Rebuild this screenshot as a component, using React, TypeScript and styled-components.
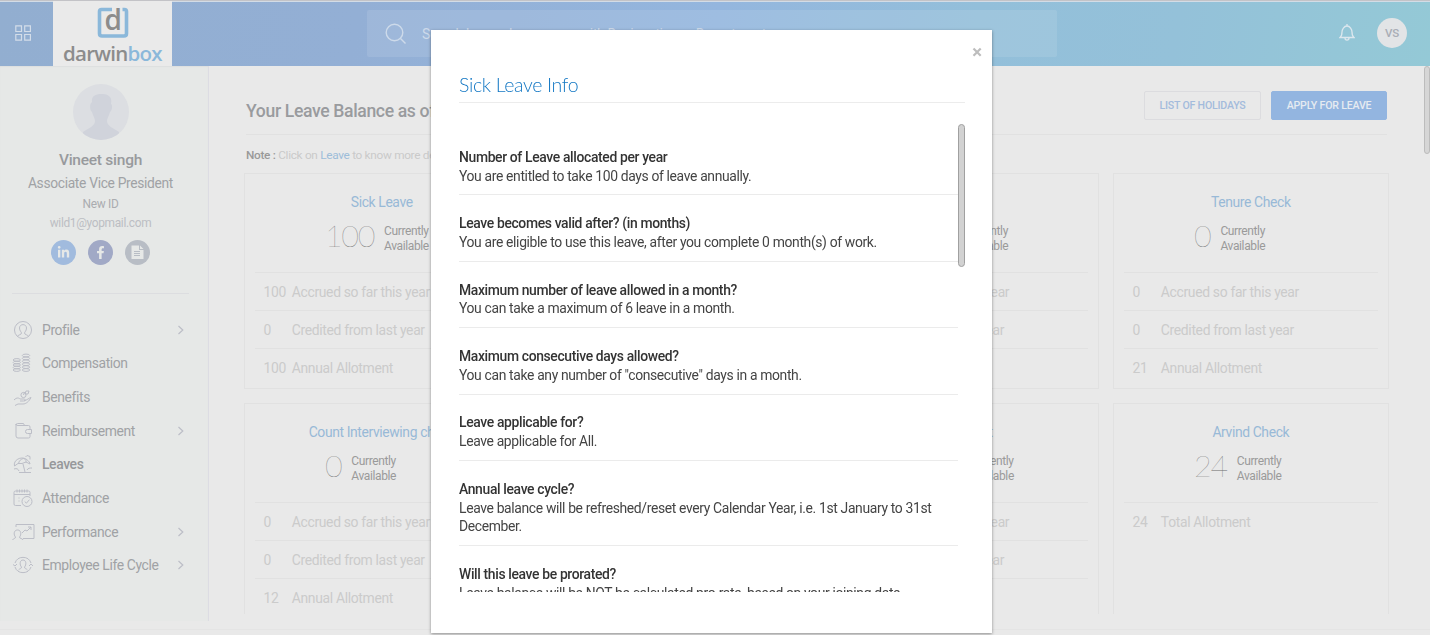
import React from 'react'
import styled, { createGlobalStyle } from 'styled-components'
import { FaLinkedinIn, FaFacebookF } from 'react-icons/fa'

const GlobalStyle = createGlobalStyle`
    * {
        box-sizing: border-box;
    }

    body {
        margin: 0;
        background: #e9e9e9;
        font-family: Roboto, sans-serif;
        overflow: hidden;
    }
`

const Page = styled.div`
    display: flex;
    flex-direction: column;
    height: 635px;
    overflow: hidden;
`

const Header = styled.header`
    flex: none;
    display: flex;
    height: 66px;
    border-top: 1px solid #c3c3c7;
    background: linear-gradient(100deg, #92aed0 0%, #93afd5 25%, #94b6de 50%, #93bfda 68%, #94c1d9 82%, #94c9d6 100%);
    box-shadow: inset 0 1px 0 #d3dce6;
`

const AppsButton = styled.div`
    display: flex;
    width: 53px;
    padding: 24px 0 0 15px;
`

const Logo = styled.div`
    display: flex;
    flex-direction: column;
    align-items: center;
    width: 119px;
    padding-top: 5px;
    background: #eaeaea;
`

const LogoText = styled.div`
    margin-top: 1px;
    font: 600 20.5px/26px 'Open Sans', sans-serif;
    letter-spacing: -0.75px;
    color: #8c8c8c;

    span {
        color: #8bb8da;
    }
`

const Search = styled.div`
    display: flex;
    align-items: center;
    width: 690px;
    height: 47px;
    margin: 9px 0 0 195px;
    padding-left: 18px;
    border-radius: 2px;
    background: rgba(255, 255, 255, 0.1);
    color: #cddaea;
    font-size: 14px;
    letter-spacing: -0.37px;

    svg {
        margin-right: 15px;
    }
`

const HeaderActions = styled.div`
    display: flex;
    align-items: center;
    margin: 0 23px 2px auto;
`

const Initials = styled.div`
    width: 30px;
    margin-left: 22px;
    border-radius: 50%;
    background: #e2e4e6;
    color: #a9adb5;
    font: 500 11.5px/30px Roboto, sans-serif;
    letter-spacing: -0.3px;
    text-align: center;
`

const Body = styled.div`
    display: flex;
    flex: none;
    height: 564px;
    border-bottom: 1px solid #e4e4e4;
`

const Sidebar = styled.aside`
    flex: none;
    width: 209px;
    height: 555px;
    border-right: 1px solid #dcdce3;
    background: #e6e8e7;
    box-shadow: inset 0 1px 1px #dddfdf;
`

const ProfileBox = styled.div`
    display: flex;
    flex-direction: column;
    align-items: center;
    width: 177px;
    height: 228px;
    margin: 0 0 18.8px 12px;
    padding-top: 18px;
    border-bottom: 1px solid #dcdde0;
`

const ProfileName = styled.div`
    margin-top: 10px;
    color: #989a9d;
    font: 500 15.5px/20px Roboto, sans-serif;
    letter-spacing: -0.25px;
`

const ProfileLine = styled.div<{ $size: number; $height: number; $color: string }>`
    color: ${p => p.$color};
    font-size: ${p => p.$size}px;
    line-height: ${p => p.$height}px;
    letter-spacing: -0.32px;
    white-space: nowrap;
`

const Socials = styled.div`
    display: flex;
    gap: 12px;
    margin-top: 6px;
`

const Social = styled.div<{ $color: string }>`
    display: flex;
    align-items: center;
    justify-content: center;
    width: 25px;
    height: 25px;
    border-radius: 50%;
    background: ${p => p.$color};
    color: #e6e8e7;
`

const NavItem = styled.div<{ $active?: boolean }>`
    display: flex;
    align-items: center;
    height: 33.7px;
    padding: 0 23px 0 12px;
    color: ${p => (p.$active ? '#96989b' : '#a0a2a5')};
    font-size: 13.9px;
    font-weight: ${p => (p.$active ? 500 : 400)};
    letter-spacing: -0.38px;

    svg {
        flex: none;
        color: #bcbec7;
    }
`

const NavLabel = styled.span`
    flex: 1;
    margin-left: 6px;
`

const Main = styled.main`
    flex: 1;
    height: 548px;
    padding: 0 0 0 35px;
    overflow: hidden;
`

const TitleBar = styled.div`
    display: flex;
    justify-content: space-between;
    width: 1141px;
    height: 69px;
    margin-left: 2px;
    padding-top: 25px;
    border-bottom: 1px solid #e1e1e1;
`

const Heading = styled.div`
    color: #999b9e;
    font: 500 17.6px/40px Roboto, sans-serif;
    letter-spacing: -0.36px;
`

const Buttons = styled.div`
    display: flex;
    gap: 10px;
`

const Button = styled.div<{ $primary?: boolean }>`
    width: ${p => (p.$primary ? 116 : 117)}px;
    height: 29px;
    border: 1px solid ${p => (p.$primary ? '#93b5e0' : '#dcdcdf')};
    border-radius: 2px;
    background: ${p => (p.$primary ? '#93b5e0' : 'transparent')};
    color: ${p => (p.$primary ? '#e6ebf1' : '#a3bbdc')};
    font: 500 10.6px/27px Roboto, sans-serif;
    letter-spacing: -0.2px;
    text-align: center;
`

const Note = styled.div`
    height: 38px;
    margin-left: 2px;
    color: #cacaca;
    font-size: 11.8px;
    line-height: 41px;
    letter-spacing: -0.3px;

    b {
        color: #999;
        font-weight: 500;
    }

    span {
        color: #9dbdd9;
    }
`

const Cards = styled.div`
    display: grid;
    grid-template-columns: repeat(4, 275.5px);
    grid-auto-rows: 215.5px;
    gap: 14.5px 14.2px;
`

const Card = styled.div`
    padding: 18px 10px 0;
    border: 1px solid #e1e1e1;
`

const CardTitle = styled.div`
    color: #98b9d7;
    font-size: 13.9px;
    line-height: 20px;
    letter-spacing: -0.38px;
    text-align: center;
    white-space: nowrap;
`

const Balance = styled.div`
    display: flex;
    align-items: center;
    height: 60.5px;
    padding: 0 0 7px 70px;
    border-bottom: 1px solid #e1e1e1;
`

const Count = styled.div`
    margin: -6px 10px 0 0;
    color: #6c6c6c;
    font: 100 30.5px/40px Lato, sans-serif;
    letter-spacing: -1.35px;
`

const Available = styled.div`
    margin-top: 1px;
    color: #9a9a9a;
    font-size: 12px;
    line-height: 15px;
    letter-spacing: -0.38px;
`

const CardRow = styled.div`
    display: flex;
    height: 38.3px;
    padding-left: 8.5px;
    border-bottom: 1px solid #e1e1e1;
    color: #cbcbcb;
    font-size: 13.9px;
    line-height: 38px;
    letter-spacing: -0.33px;
    white-space: nowrap;

    &:last-child {
        border-bottom: 0;
    }

    span {
        width: 28.3px;
    }
`

const PageScroll = styled.div`
    width: 6px;
    height: 88px;
    border: 1px solid #bcbcbc;
    border-radius: 3px;
    background: #d6d6d6;
`

const Modal = styled.div`
    position: fixed;
    top: 30px;
    left: 431px;
    width: 561px;
    height: 603px;
    padding: 15px 27px 0 28px;
    background: #fff;
    box-shadow: 0 1px 3px rgba(0, 0, 0, 0.4);
`

const Close = styled.div`
    display: flex;
    justify-content: flex-end;
    height: 26px;
    margin-right: -17.5px;
    padding-top: 0.5px;
`

const ModalTitle = styled.div`
    height: 32px;
    border-bottom: 1px solid #ececec;
    color: #1478c4;
    font: 300 19.5px/27px Lato, sans-serif;
    letter-spacing: -0.34px;
`

const ModalBody = styled.div`
    display: flex;
    justify-content: space-between;
    height: 468px;
    margin-top: 21px;
    overflow: hidden;
`

const InfoList = styled.div`
    width: 500px;
    padding-top: 5px;
`

const Info = styled.div`
    padding: 18.9px 0 9px;
    border-bottom: 1px solid #ebebeb;
    color: #444;
    font-size: 13.9px;
    line-height: 18.75px;
    letter-spacing: -0.35px;

    b {
        display: block;
        color: #333;
        font-weight: 500;
    }
`

const ModalScroll = styled.div`
    width: 7px;
    height: 143px;
    border: 1px solid #a0a0a0;
    border-radius: 3.5px;
    background: #d2d2d2;
`

const iconPaths: Record<string, React.ReactNode> = {
    profile: <><circle cx="11" cy="10" r="8.5" /><path d="M5.500 16.500c.500-2 4-1.500 4-3.500 0-1-2-2-2-5 0-4.500 7-4.500 7 0 0 3-2 4-2 5 0 2 3.500 1.500 4 3.500" /></>,
    compensation: <>
        {[7, 9.5, 12, 14.5, 17].map(y => <ellipse key={y} cx="4.8" cy={y} rx="3.6" ry="1.4" />)}
        {[2.5, 5.4, 8.3, 11.2, 14.1, 17].map(y => <ellipse key={y} cx="14" cy={y} rx="3.7" ry="1.4" />)}
    </>,
    benefits: <><path d="M2 13c3-3 5-2 6-1h4c2 0 1 2-.500 2H8m4 0c3-1 5-3 7-3.500-2 4-5 6.500-8 6.500H6l-3 1.500" /><circle cx="11.500" cy="8" r="2.600" /><path d="M11.500 8l1-3M14 4h3l-1 3h-3z" /></>,
    reimbursement: <><path d="M18 8V6Q18 4.500 16.500 4.500H6Q4 4.500 4 3V15q0 2 2 2h10.500Q18 17 18 15.500V13M4 4Q4 2.500 5.500 2.500H11.500l1 2" /><path d="M19.500 8.500h-4a2 2 0 000 4h4z" /></>,
    leaves: <><path d="M2.500 12C1 6 9 2 14 5c3 2 4 4 4 5l-4-2-4 1.500-4 0zM6.500 10c0-3 3-5.500 5-5.500 3 1 2.500 2.500 2.500 4M11 10l2 8M2 15c3-1 4 0 5 2M15 16c1-2 3-2 5-2M7 18.500h12M13.500 3l1.500-1.500 3 1v3" /></>,
    attendance: <><path d="M9 17.500H3.500Q2 17.500 2 16V4.500Q2 3 3.500 3h13q1.500 0 1.500 1.500V8M2 6.500h16M5 1.500v3m2.500-3v3M10 1.500v3m2.500-3v3M15 1.500v3M6.500 10h1m-1 3h1" /><circle cx="15" cy="13.500" r="5" /><path d="M12.700 13.500l1.700 1.700 3-3.500" /></>,
    performance: <><path d="M4 5V2.500h18v14H11M.500 18c1-2 3-1 3-3-2-2-2-7 2-7s4 5 2 7c0 2 3 1 3.500 3M10 11l3-3 2 1 4-4m-3 0h3v3" /></>,
    cycle: <><path d="M3 8a8.500 8.500 0 0116 0M3 12a8.500 8.500 0 0016 0M1 9.500l2 1.500 2-2m16 2l-2-2-2 2M6.500 15c1-1.500 3-1 3-3-2-2-2-7 1.500-7s3.500 5 1.500 7c0 2 2 1.500 3 3" /></>,
}

const NavIcon = ({ name }: { name: string }) => (
    <svg width="24" height="20" viewBox="0 0 24 20" fill="none" stroke="currentColor" strokeWidth="1">
        {iconPaths[name]}
    </svg>
)

const Chevron = () => (
    <svg width="8" height="10" viewBox="0 0 8 10" fill="none" stroke="currentColor" strokeWidth="1.2">
        <path d="M1.500 1l4.300 4-4.300 4" />
    </svg>
)

const navItems = [
    { icon: 'profile', label: 'Profile', more: true },
    { icon: 'compensation', label: 'Compensation' },
    { icon: 'benefits', label: 'Benefits' },
    { icon: 'reimbursement', label: 'Reimbursement', more: true },
    { icon: 'leaves', label: 'Leaves', active: true },
    { icon: 'attendance', label: 'Attendance' },
    { icon: 'performance', label: 'Performance', more: true },
    { icon: 'cycle', label: 'Employee Life Cycle', more: true },
]

const yearRows = (accrued: string, credited: string, annual: string) => [
    [accrued, 'Accrued so far this year'],
    [credited, 'Credited from last year'],
    [annual, 'Annual Allotment'],
]

const cards = [
    { title: 'Sick Leave', count: '100', rows: yearRows('100', '0', '100') },
    { title: 'Casual Leave', count: '12', rows: yearRows('12', '0', '12') },
    { title: 'Paid', count: '100', rows: yearRows('100', '0', '100') },
    { title: 'Tenure Check', count: '0', rows: yearRows('0', '0', '21') },
    { title: 'Count Interviewing check', count: '0', rows: yearRows('0', '0', '12') },
    { title: 'Earned Leave', count: '10', rows: yearRows('10', '0', '10') },
    { title: 'Count Test', count: '12.5', rows: yearRows('12', '0', '12') },
    { title: 'Arvind Check', count: '24', rows: [['24', 'Total Allotment']] },
]

const leaveInfo = [
    ['Number of Leave allocated per year', 'You are entitled to take 100 days of leave annually.'],
    ['Leave becomes valid after? (in months)', 'You are eligible to use this leave, after you complete 0 month(s) of work.'],
    ['Maximum number of leave allowed in a month?', 'You can take a maximum of 6 leave in a month.'],
    ['Maximum consecutive days allowed?', 'You can take any number of "consecutive" days in a month.'],
    ['Leave applicable for?', 'Leave applicable for All.'],
    ['Annual leave cycle?', 'Leave balance will be refreshed/reset every Calendar Year, i.e. 1st January to 31st December.'],
    ['Will this leave be prorated?', 'Leave balance will be NOT be calculated pro-rata, based on your joining date.'],
]

const App = () => {
    const renderHeader = () => (
        <Header>
            <AppsButton>
                <svg width="17" height="17" viewBox="0 0 17 17" fill="none" stroke="#d3dde9" strokeWidth="1.2">
                    <path d="M.8.8h5.700v5.700H.8zM9.700.8h5.700v5.700H9.700zM.8 9.500h5.700v5.700H.8zM9.700 9.500h5.700v5.700H9.700z" />
                </svg>
            </AppsButton>
            <Logo>
                <svg width="32" height="33" viewBox="0 0 32 33">
                    <path d="M15 3.500H4.500Q2.500 3.500 2.500 5.500v22q0 2.500 2.500 2.500h22q2.500 0 2.500-2.500V5.500q0-2-2-2h-2" fill="none" stroke="#8bb8da" strokeWidth="3.600" />
                    <text x="7.500" y="24" fill="#8c8c8c" fontFamily="Open Sans, sans-serif" fontWeight="600" fontSize="28">d</text>
                </svg>
                <LogoText>darwin<span>box</span></LogoText>
            </Logo>
            <Search>
                <svg width="22" height="22" viewBox="0 0 22 22" fill="none" stroke="#cddaea" strokeWidth="1.400">
                    <circle cx="9.500" cy="9.500" r="8.300" />
                    <path d="M15.500 15.500l5 5" />
                </svg>
                Search by employee name with Designation or Department
            </Search>
            <HeaderActions>
                <svg width="16" height="18" viewBox="0 0 16 18" fill="none" stroke="#dce7ee" strokeWidth="1.300">
                    <path d="M1 13.500c2-1.500 2-3 2-5.500s2-6 5-6 5 3.500 5 6 0 4 2 5.500zM8 0v2M6 14c0 2.700 4 2.700 4 0" />
                </svg>
                <Initials>VS</Initials>
            </HeaderActions>
        </Header>
    )

    const renderSidebar = () => (
        <Sidebar>
            <ProfileBox>
                <svg width="56" height="56" viewBox="0 0 56 56">
                    <clipPath id="avatar"><circle cx="28" cy="28" r="28" /></clipPath>
                    <circle cx="28" cy="28" r="28" fill="#dcdee2" />
                    <path clipPath="url(#avatar)" fill="#d0d3db" d="M19 18c-1-6 4-8 9-8s12 1 10 10c2 1 1 7-1 8-1 4-3 6-3 9 0 5 6 7 12 11v8H10v-8c6-4 12-6 12-11 0-3-2-5-3-9-2-1-3-8 0-10z" />
                </svg>
                <ProfileName>Vineet singh</ProfileName>
                <ProfileLine $size={13.8} $height={26} $color="#a0a2a5">Associate Vice President</ProfileLine>
                <ProfileLine $size={11.9} $height={16} $color="#aaacb0">New ID</ProfileLine>
                <ProfileLine $size={11.9} $height={22} $color="#bcbec3">wild1@yopmail.com</ProfileLine>
                <Socials>
                    <Social $color="#a1bbde"><FaLinkedinIn size={13} /></Social>
                    <Social $color="#a1a9c6"><FaFacebookF size={13} /></Social>
                    <Social $color="#b8bdc5">
                        <svg width="13" height="15" viewBox="0 0 13 15">
                            <path d="M.5.500h7.500v4.500h4.500V14H.5zM9 .500L12.500 4H9z" fill="#e6e8e7" />
                            <path d="M3 6.500h6M3 8.500h6M3 10.500h6" stroke="#b8bdc5" />
                        </svg>
                    </Social>
                </Socials>
            </ProfileBox>
            {navItems.map(item => (
                <NavItem key={item.label} $active={item.active}>
                    <NavIcon name={item.icon} />
                    <NavLabel>{item.label}</NavLabel>
                    {item.more && <Chevron />}
                </NavItem>
            ))}
        </Sidebar>
    )

    const renderCard = (card: any) => (
        <Card key={card.title}>
            <CardTitle>{card.title}</CardTitle>
            <Balance>
                <Count>{card.count}</Count>
                <Available>Currently<br />Available</Available>
            </Balance>
            {card.rows.map(([value, label]: string[]) => (
                <CardRow key={label}><span>{value}</span>{label}</CardRow>
            ))}
        </Card>
    )

    const renderModal = () => (
        <Modal>
            <Close>
                <svg width="11" height="11" viewBox="0 0 11 11" stroke="#bdbdbd" strokeWidth="2.200">
                    <path d="M1.500 2.500l7.200 7.200M8.700 2.500L1.500 9.700" />
                </svg>
            </Close>
            <ModalTitle>Sick Leave Info</ModalTitle>
            <ModalBody>
                <InfoList>
                    {leaveInfo.map(([question, answer]) => (
                        <Info key={question}><b>{question}</b>{answer}</Info>
                    ))}
                </InfoList>
                <ModalScroll />
            </ModalBody>
        </Modal>
    )

    return (
        <Page>
            <GlobalStyle />
            {renderHeader()}
            <Body>
                {renderSidebar()}
                <Main>
                    <TitleBar>
                        <Heading>Your Leave Balance as of Today</Heading>
                        <Buttons>
                            <Button>LIST OF HOLIDAYS</Button>
                            <Button $primary>APPLY FOR LEAVE</Button>
                        </Buttons>
                    </TitleBar>
                    <Note><b>Note :</b> Click on <span>Leave</span> to know more details</Note>
                    <Cards>{cards.map(renderCard)}</Cards>
                </Main>
                <PageScroll />
            </Body>
            {renderModal()}
        </Page>
    )
}

export default App
